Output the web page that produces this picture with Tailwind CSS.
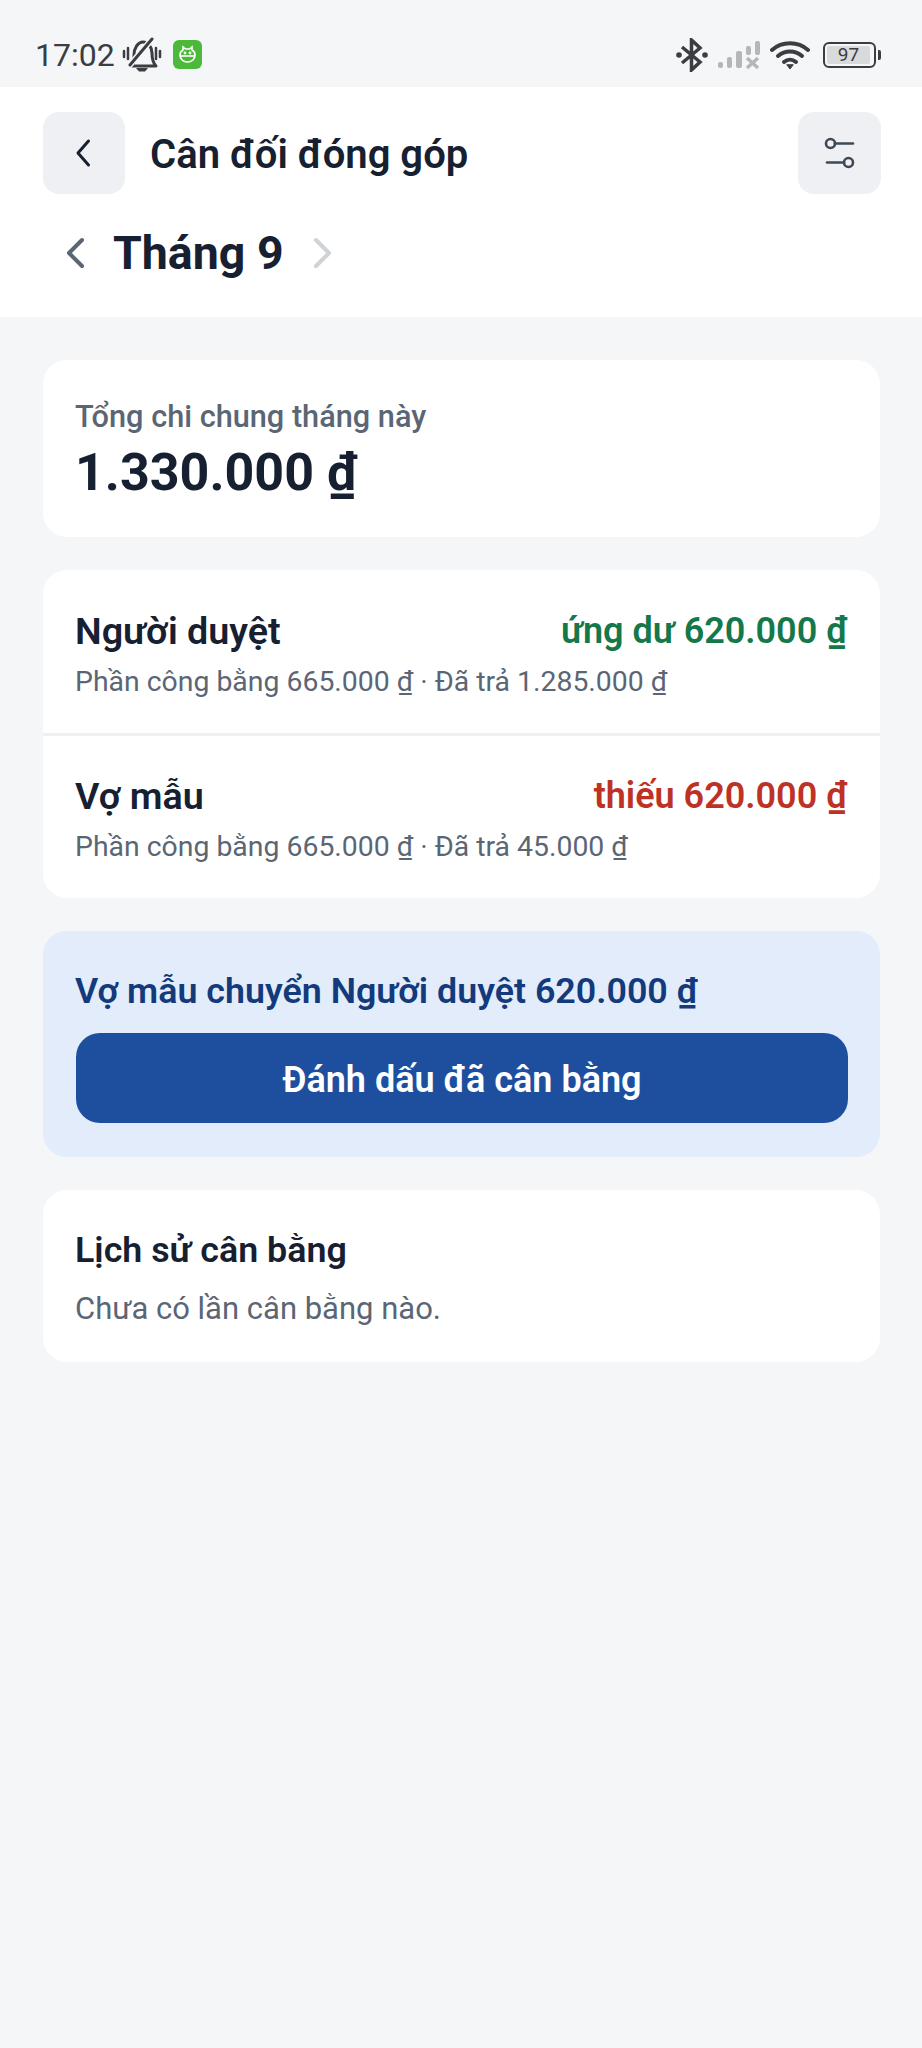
<!DOCTYPE html>
<html lang="vi">

<head>
    <meta charset="UTF-8">
    <meta name="viewport" content="width=device-width, initial-scale=1.0">
    <title>Cân đối đóng góp</title>
    <script src="https://cdn.jsdelivr.net/npm/@tailwindcss/browser@4"></script>
</head>

<body class="h-[2048px] bg-[#f4f6f8] font-[Roboto,sans-serif] text-[#172031]">
    <!-- Status bar -->
    <div class="h-[87px] flex items-center justify-between pl-[35px] pr-[41px] pt-[22px] text-[#3a3d42]">
        <div class="flex items-center">
            <span class="text-[32px] leading-none">17:02</span>
            <svg class="ml-[7px] w-[40px] h-[36px]" viewBox="0 0 40 36" fill="none" stroke="currentColor" stroke-width="3" stroke-linecap="round" stroke-linejoin="round">
                <path d="M9 29c3-2 3-6 3-11 0-7 4-13 9-13s9 5 9 11c0 6 1 10 4 13z"/>
                <path d="M14 31h12l-3 3.500h-6z" fill="currentColor" stroke="none"/>
                <path d="M31 1 7 29" stroke="#f4f6f8" stroke-width="6"/>
                <path d="M30 2 8 28"/>
                <path d="M2 14v6M6 11v11M34 11v11M38 14v6" stroke-width="2.500"/>
            </svg>
            <div class="ml-[11px] w-[29px] h-[29px] rounded-[6px] bg-[#4cb93b] flex items-center justify-center">
                <svg class="w-[19px] h-[19px]" viewBox="0 0 19 19" fill="none" stroke="#fff" stroke-width="1.600">
                    <path d="M5 5V2l2.500 2h4L14 2v3c2 1 3 3 3 5 0 4-3 7-7.500 7S2 14 2 10c0-2 1-4 3-5z"/>
                    <path d="M2.500 11h14"/>
                    <circle cx="7" cy="8" r=".6" fill="#fff"/>
                    <circle cx="12" cy="8" r=".6" fill="#fff"/>
                </svg>
            </div>
        </div>
        <div class="flex items-center">
            <svg class="w-[32px] h-[34px]" viewBox="0 0 32 34" fill="none" stroke="currentColor" stroke-width="3.500">
                <path d="M6 9 24 24 15.500 32V2L24 10 6 25"/>
                <circle cx="3" cy="17" r="2.800" fill="currentColor" stroke="none"/>
                <circle cx="29" cy="17" r="2.800" fill="currentColor" stroke="none"/>
            </svg>
            <svg class="ml-[10px] w-[42px] h-[30px] text-[#b4b6b9]" viewBox="0 0 42 30" fill="currentColor">
                <rect x="0" y="22" width="5" height="6" rx="2"/>
                <rect x="9" y="17" width="5" height="11" rx="2"/>
                <rect x="18" y="11" width="6" height="17" rx="2"/>
                <rect x="28" y="6" width="5" height="9" rx="2"/>
                <rect x="37" y="1" width="5" height="14" rx="2"/>
                <path d="M29 18 40 28M40 18 29 28" fill="none" stroke="currentColor" stroke-width="3.500"/>
            </svg>
            <svg class="ml-[10px] w-[40px] h-[30px]" viewBox="0 0 40 30" fill="none" stroke="currentColor" stroke-width="4" stroke-linecap="round">
                <path d="M2 10c10-9 26-9 36 0"/>
                <path d="M8 16c7-6 17-6 24 0"/>
                <path d="M14 22c3.500-3 8.500-3 12 0"/>
                <path d="M17 25 20 29 23 25Z" fill="currentColor" stroke-width="1"/>
            </svg>
            <div class="ml-[13px] w-[53px] h-[26px] rounded-[6px] border-[2.500px] border-[#3a3d42] p-[2px]">
                <div class="w-[43px] h-full rounded-[2px] bg-[#d9dadb] flex items-center justify-center text-[19px] leading-none">97</div>
            </div>
            <div class="ml-[2px] w-[3px] h-[10px] rounded-r-[2px] bg-[#3a3d42]"></div>
        </div>
    </div>

    <!-- Header -->
    <div class="h-[230px] bg-white pl-[43px] pr-[41px] pt-[25px]">
        <div class="flex items-center justify-between">
            <div class="flex items-center">
                <div class="w-[82px] h-[82px] rounded-[16px] bg-[#eef0f3] flex items-center justify-center">
                    <svg class="w-[32px] h-[32px]" viewBox="0 0 32 32" fill="none" stroke="#172031" stroke-width="3" stroke-linecap="round" stroke-linejoin="round">
                        <path d="M20.500 4 10 16l10.500 12"/>
                    </svg>
                </div>
                <div class="ml-[25px] pt-[4px] text-[40px] font-semibold leading-none">Cân đối đóng góp</div>
            </div>
            <div class="w-[83px] h-[82px] rounded-[16px] bg-[#eef0f3] flex items-center justify-center">
                <svg class="w-[32px] h-[32px]" viewBox="0 0 32 32" fill="none" stroke="#3f4856" stroke-width="2.600" stroke-linecap="round">
                    <circle cx="6.500" cy="6.500" r="4.500"/>
                    <path d="M11 6.500h18"/>
                    <circle cx="24.500" cy="25.500" r="4.500"/>
                    <path d="M3 25.500h17"/>
                </svg>
            </div>
        </div>
        <div class="mt-[36px] flex items-center pl-[22px]">
            <svg class="w-[22px] h-[36px]" viewBox="0 0 22 36" fill="none" stroke="#5b6675" stroke-width="4" stroke-linecap="round" stroke-linejoin="round">
                <path d="M17 5 4 18l13 13"/>
            </svg>
            <div class="ml-[26px] text-[46.500px] font-bold leading-none">Tháng 9</div>
            <svg class="ml-[28px] w-[22px] h-[36px]" viewBox="0 0 22 36" fill="none" stroke="#cfd2d6" stroke-width="4" stroke-linecap="round" stroke-linejoin="round">
                <path d="M4 5l13 13L4 31"/>
            </svg>
        </div>
    </div>

    <!-- Content -->
    <div class="pl-[43px] pr-[42px] pt-[43px] flex flex-col gap-[33px]">
        <div class="h-[177px] bg-white rounded-[24px] pl-[32px] pr-[33px] pt-[38px]">
            <div class="text-[30.700px] leading-[38px] font-medium text-[#5b6675]">Tổng chi chung tháng này</div>
            <div class="mt-[7px] text-[52px] leading-[60px] font-bold">1.330.000 ₫</div>
        </div>

        <div class="bg-white rounded-[24px]">
            <div class="h-[166px] pl-[32px] pr-[33px] pt-[39px] border-b-[3px] border-[#eef0f3]">
                <div class="flex items-center justify-between leading-[44px]">
                    <span class="text-[37.700px] font-semibold">Người duyệt</span>
                    <span class="text-[36px] font-semibold text-[#15784b]">ứng dư 620.000 ₫</span>
                </div>
                <div class="mt-[10px] text-[28.400px] leading-[38px] text-[#5b6675]">Phần công bằng 665.000 ₫ · Đã trả 1.285.000 ₫</div>
            </div>
            <div class="h-[162px] pl-[32px] pr-[33px] pt-[38px]">
                <div class="flex items-center justify-between leading-[44px]">
                    <span class="text-[37.700px] font-semibold">Vợ mẫu</span>
                    <span class="text-[36px] font-semibold text-[#bd3225]">thiếu 620.000 ₫</span>
                </div>
                <div class="mt-[10px] text-[28.400px] leading-[38px] text-[#5b6675]">Phần công bằng 665.000 ₫ · Đã trả 45.000 ₫</div>
            </div>
        </div>

        <div class="h-[226px] bg-[#e2ecfa] rounded-[24px] pl-[33px] pr-[32px] pt-[38px]">
            <div class="-ml-[1px] text-[35.800px] leading-[44px] font-semibold text-[#123a7c]">Vợ mẫu chuyển Người duyệt 620.000 ₫</div>
            <div class="mt-[20px] h-[90px] pt-[3px] rounded-[24px] bg-[#1e4f9f] flex items-center justify-center text-white text-[36px] font-semibold">Đánh dấu đã cân bằng</div>
        </div>

        <div class="h-[172px] bg-white rounded-[24px] pl-[32px] pr-[33px] pt-[38px]">
            <div class="text-[35.800px] leading-[44px] font-semibold">Lịch sử cân bằng</div>
            <div class="mt-[18px] text-[31px] leading-[38px] text-[#5b6675]">Chưa có lần cân bằng nào.</div>
        </div>
    </div>
</body>

</html>
